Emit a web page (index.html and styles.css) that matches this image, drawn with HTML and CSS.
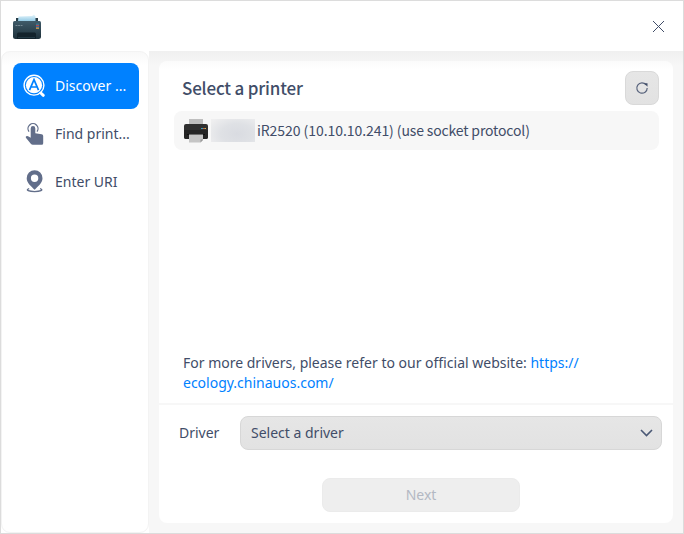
FILE: index.html
```html
<!DOCTYPE html>
<html lang="en">
<head>
<meta charset="utf-8">
<title>Add printer</title>
<link rel="stylesheet" href="styles.css">
</head>
<body>
<div class="window">
  <header class="titlebar">
    <svg class="app-icon" width="30" height="28" viewBox="0 0 30 28">
      <defs>
        <linearGradient id="shell" x1="0" y1="0" x2="0" y2="1"><stop offset="0" stop-color="#405b69"/><stop offset="1" stop-color="#1d303a"/></linearGradient>
        <linearGradient id="paper" x1="0" y1="0" x2="0" y2="1"><stop offset="0" stop-color="#e9f7fd"/><stop offset="1" stop-color="#94cbe5"/></linearGradient>
      </defs>
      <path d="M4 5h22v5H4z" fill="#263c47"/>
      <path d="M6.500 3.500 20 3l2-1.500 1.500 2v4.500H6z" fill="url(#paper)"/>
      <path d="M2.500 8h25q1.500 0 1.500 1.500v14q0 2.500-2.500 2.500h-23Q1 26 1 23.500v-14Q1 8 2.500 8z" fill="url(#shell)"/>
      <path d="M5 21q0-1.500 1.500-1.500h16q1.500 0 1.500 1.500v5H5z" fill="#13232c"/>
      <path d="M6 24h17v1H6z" fill="#243a45"/>
      <path d="M3.500 12.500h7" stroke="#8496a0" stroke-width=".8" stroke-dasharray="2 .6"/>
      <path d="M24 10.500h3v1.500h-3z" fill="#3b7690"/>
      <path d="M24 12h3v1.300h-3z" fill="#b5474b"/>
      <path d="M24 13.300h3v1.200h-3z" fill="#3d6eb4"/>
      <path d="M24 14.500h3v1.300h-3z" fill="#d7a449"/>
    </svg>
    <svg class="close" width="11" height="11" viewBox="0 0 11 11"><path d="M0 0l11 11M11 0L0 11" stroke="#414d68" stroke-width="1"/></svg>
  </header>
  <div class="content">
    <nav class="sidebar">
      <a class="nav-item active">
        <svg width="24" height="24" viewBox="0 0 24 24" fill="none" stroke="#fff">
          <circle cx="11" cy="11.200" r="9.900" stroke-width="1.400"/>
          <circle cx="11" cy="11.200" r="8.100" fill="#fff" stroke="none"/>
          <path d="M6.500 16.200L11 5.700l4.500 10.500M8.200 13h5.600" stroke="#0081ff" stroke-width="1.700"/>
          <path d="M17.800 19l2.500 2.300" stroke-width="3" stroke-linecap="round"/>
        </svg>
        <span>Discover ...</span>
      </a>
      <a class="nav-item">
        <svg width="24" height="24" viewBox="0 0 24 24" fill="#626e8a">
          <path d="M6 9.600A5 5 0 1 1 14 9.600" fill="none" stroke="#626e8a" stroke-width="1.300"/>
          <path d="M7.700 6.400a2.300 2.300 0 0 1 4.600 0v4.800l6.300 1q1.600.3 1.600 1.800v7.200q0 1.500-1.500 1.500H9.800q-1.200 0-2-.9l-4.700-5.700q-.9-1.200.1-1.900 1.100-.7 2.400.2l2.100 1.300z"/>
        </svg>
        <span>Find print...</span>
      </a>
      <a class="nav-item">
        <svg width="24" height="24" viewBox="0 0 24 24" fill="#626e8a">
          <path fill-rule="evenodd" d="M11.600.2a7.900 7.900 0 0 1 7.900 8c0 4.600-4.400 7.900-7.900 11.600-3.500-3.700-7.900-7-7.900-11.600a7.900 7.900 0 0 1 7.900-8zm0 4.300a3.700 3.700 0 1 0 0 7.400 3.700 3.700 0 0 0 0-7.400z"/>
          <path d="M6.200 18.700c-4.500 1.500.2 2.900 5.400 2.900s9.900-1.400 5.400-2.900" fill="none" stroke="#626e8a" stroke-width="1.400"/>
        </svg>
        <span>Enter URI</span>
      </a>
    </nav>
    <main class="main">
      <section class="panel">
        <div class="panel-head">
          <h1>Select a printer</h1>
          <button class="refresh" aria-label="Refresh">
            <svg width="14" height="14" viewBox="0 0 14 14" fill="none" stroke="#59647d"><path d="M11.100 3.800A5.200 5.200 0 1 0 12.200 7" stroke-width="1.200"/><path d="M9 2.300h3.500v3.500z" fill="#414d68" stroke="none"/></svg>
          </button>
        </div>
        <div class="printer">
          <svg width="26" height="26" viewBox="0 0 26 26">
            <path d="M6 1h14v7H6z" fill="#bfbfbf"/>
            <path d="M3 6h20q2 0 2 2v11q0 2-2 2H3q-2 0-2-2V8q0-2 2-2z" fill="#303030"/>
            <path d="M1 12h24v7q0 2-2 2H3q-2 0-2-2z" fill="#252525"/>
            <path d="M4 16h18v1H4z" fill="#111"/>
            <path d="M6 16.500h14V22l-2.500 2.500H6z" fill="#c5c5c5"/>
            <path d="M20 21.500V22l-2.500 2.500v-3z" fill="#999"/>
            <path d="M18 10h2v1h-2z" fill="#37a3bd"/><path d="M20 10h1.500v1H20z" fill="#cf554b"/><path d="M21.500 10H23v1h-1.500z" fill="#d9b348"/>
          </svg>
          <span class="redacted"></span>
          <span class="printer-name">iR2520 (10.10.10.241) <span class="protocol">(use socket protocol)</span></span>
        </div>
        <p class="hint">For more drivers, please refer to our official website: <a>https://<br>ecology.chinauos.com/</a></p>
        <div class="driver-row">
          <label>Driver</label>
          <div class="select"><span>Select a driver</span>
            <svg width="13" height="8" viewBox="0 0 13 8"><path d="M1 1l5.500 5.500L12 1" fill="none" stroke="#4a5875" stroke-width="1.600"/></svg>
          </div>
        </div>
        <button class="next" disabled>Next</button>
      </section>
    </main>
  </div>
</div>
</body>
</html>
```

FILE: styles.css
```css
* { box-sizing: border-box; }
body {
  margin: 0;
  font: 14px/20px "Noto Sans", sans-serif;
  color: #414d68;
}
.window {
  width: 684px;
  height: 534px;
  border: 1px solid #dcdcdc;
  background: #fff;
  display: flex;
  flex-direction: column;
}
.titlebar {
  height: 50px;
  flex: none;
  padding: 0 19px 0 11px;
  display: flex;
  align-items: center;
  justify-content: space-between;
}
.app-icon { margin-top: 1px; }
.close { margin-top: 1px; }
.content { flex: 1; display: flex; }
.sidebar {
  width: 148px;
  flex: none;
  padding: 11px 9px 0 11px;
  border: 1px solid #f3f3f3;
  border-radius: 9px;
  background: linear-gradient(#f8f8f8, #fff 14px);
  display: flex;
  flex-direction: column;
  gap: 2px;
}
.nav-item {
  height: 46px;
  flex: none;
  padding-left: 10px;
  border-radius: 8px;
  display: flex;
  align-items: center;
  gap: 8px;
  white-space: nowrap;
}
.nav-item svg { flex: none; }
.active { background: #0081ff; color: #fff; }
.main {
  flex: 1;
  padding: 10px;
  background: linear-gradient(#f0f0f0, #f7f7f7 15px);
}
.panel {
  width: 514px;
  height: 462px;
  border-radius: 8px;
  background: linear-gradient(#fbfbfb, #fff 8px);
  display: flex;
  flex-direction: column;
}
.panel-head {
  height: 50px;
  flex: none;
  padding: 10px 14px 0 23px;
  display: flex;
  justify-content: space-between;
}
h1 {
  margin: 4px 0 0;
  font: 500 17px/25px "Noto Sans CJK SC", sans-serif;
  letter-spacing: -.18px;
}
.refresh {
  width: 34px;
  height: 34px;
  padding: 0;
  border: 1px solid #d9d9d9;
  border-radius: 8px;
  background: linear-gradient(#e6e6e6, #e2e2e2);
  display: flex;
  align-items: center;
  justify-content: center;
}
.printer {
  height: 39px;
  flex: none;
  margin: 0 14px 0 15px;
  padding-left: 9px;
  border-radius: 8px;
  background: #f7f7f7;
  display: flex;
  align-items: center;
}
.redacted {
  width: 44px;
  height: 23px;
  margin: 0 2px;
  background: radial-gradient(ellipse 75% 90% at 60% 65%, #d9dbe1, #dfe1e5 50%, #efeff0);
}
.printer-name {
  padding-bottom: 2px;
  font-family: "Noto Sans CJK SC", sans-serif;
  letter-spacing: -.06px;
}
.protocol { letter-spacing: -.15px; }
.hint { margin: 203px 0 10px 24px; }
.hint a { color: #0081ff; }
.driver-row {
  border-top: 2px solid #f7f7f7;
  padding: 11px 11px 0 20px;
  display: flex;
  align-items: center;
  justify-content: space-between;
}
.select {
  width: 422px;
  height: 34px;
  padding: 0 8px 0 10px;
  border: 1px solid #d7d7d7;
  border-radius: 8px;
  background: linear-gradient(#e6e6e6, #e2e2e2);
  display: flex;
  align-items: center;
  justify-content: space-between;
}
.next {
  width: 198px;
  height: 34px;
  margin: 28px 0 0 163px;
  padding: 0;
  border: 1px solid #ebebeb;
  border-radius: 8px;
  background: #eee;
  color: #b3b8c3;
  font: inherit;
}
```
